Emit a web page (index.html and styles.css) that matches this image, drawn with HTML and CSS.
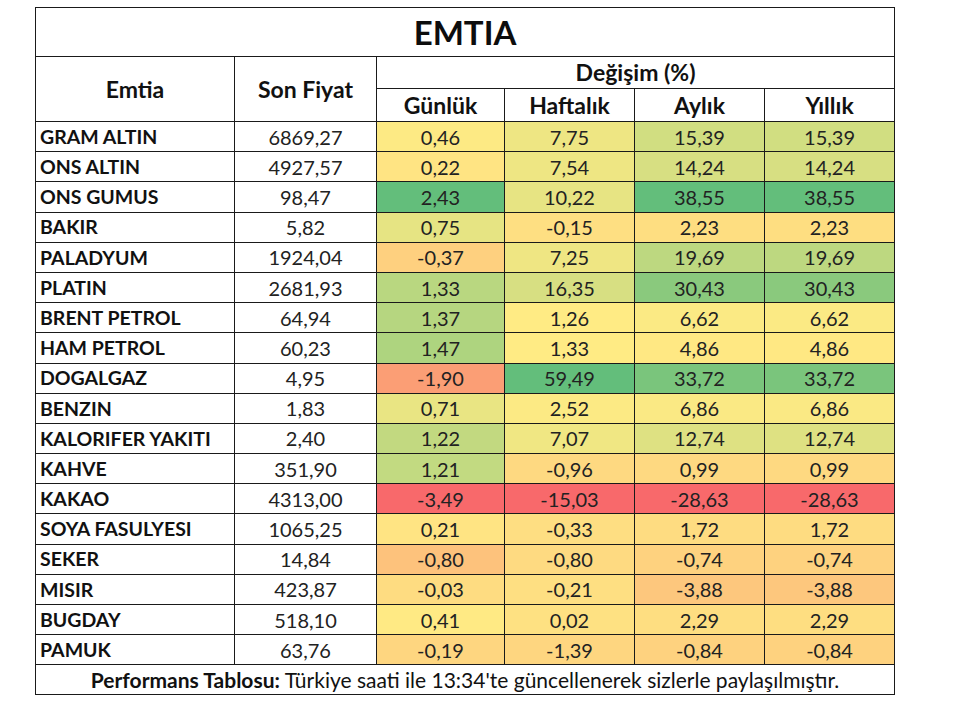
FILE: index.html
```html
<!DOCTYPE html>
<html lang="tr">
<head>
<meta charset="utf-8">
<title>EMTIA</title>
<link rel="stylesheet" href="styles.css">
</head>
<body>
<main class="page">
<table class="emtia">
<colgroup>
<col class="c-name"><col class="c-price"><col class="c-chg1"><col class="c-chg"><col class="c-chg"><col class="c-chg">
</colgroup>
<thead>
<tr class="title-row"><th colspan="6" class="title">EMTIA</th></tr>
<tr class="head1"><th rowspan="2">Emtia</th><th rowspan="2">Son Fiyat</th><th colspan="4">Değişim (%)</th></tr>
<tr class="head2"><th>Günlük</th><th>Haftalık</th><th>Aylık</th><th>Yıllık</th></tr>
</thead>
<tbody>
<tr><td class="name">GRAM ALTIN</td><td class="price">6869,27</td><td class="chg">0,46</td><td class="chg">7,75</td><td class="chg">15,39</td><td class="chg">15,39</td></tr>
<tr><td class="name">ONS ALTIN</td><td class="price">4927,57</td><td class="chg">0,22</td><td class="chg">7,54</td><td class="chg">14,24</td><td class="chg">14,24</td></tr>
<tr><td class="name">ONS GUMUS</td><td class="price">98,47</td><td class="chg">2,43</td><td class="chg">10,22</td><td class="chg">38,55</td><td class="chg">38,55</td></tr>
<tr><td class="name">BAKIR</td><td class="price">5,82</td><td class="chg">0,75</td><td class="chg">-0,15</td><td class="chg">2,23</td><td class="chg">2,23</td></tr>
<tr><td class="name">PALADYUM</td><td class="price">1924,04</td><td class="chg">-0,37</td><td class="chg">7,25</td><td class="chg">19,69</td><td class="chg">19,69</td></tr>
<tr><td class="name">PLATIN</td><td class="price">2681,93</td><td class="chg">1,33</td><td class="chg">16,35</td><td class="chg">30,43</td><td class="chg">30,43</td></tr>
<tr><td class="name">BRENT PETROL</td><td class="price">64,94</td><td class="chg">1,37</td><td class="chg">1,26</td><td class="chg">6,62</td><td class="chg">6,62</td></tr>
<tr><td class="name">HAM PETROL</td><td class="price">60,23</td><td class="chg">1,47</td><td class="chg">1,33</td><td class="chg">4,86</td><td class="chg">4,86</td></tr>
<tr><td class="name">DOGALGAZ</td><td class="price">4,95</td><td class="chg">-1,90</td><td class="chg">59,49</td><td class="chg">33,72</td><td class="chg">33,72</td></tr>
<tr><td class="name">BENZIN</td><td class="price">1,83</td><td class="chg">0,71</td><td class="chg">2,52</td><td class="chg">6,86</td><td class="chg">6,86</td></tr>
<tr><td class="name">KALORIFER YAKITI</td><td class="price">2,40</td><td class="chg">1,22</td><td class="chg">7,07</td><td class="chg">12,74</td><td class="chg">12,74</td></tr>
<tr><td class="name">KAHVE</td><td class="price">351,90</td><td class="chg">1,21</td><td class="chg">-0,96</td><td class="chg">0,99</td><td class="chg">0,99</td></tr>
<tr><td class="name">KAKAO</td><td class="price">4313,00</td><td class="chg">-3,49</td><td class="chg">-15,03</td><td class="chg">-28,63</td><td class="chg">-28,63</td></tr>
<tr><td class="name">SOYA FASULYESI</td><td class="price">1065,25</td><td class="chg">0,21</td><td class="chg">-0,33</td><td class="chg">1,72</td><td class="chg">1,72</td></tr>
<tr><td class="name">SEKER</td><td class="price">14,84</td><td class="chg">-0,80</td><td class="chg">-0,80</td><td class="chg">-0,74</td><td class="chg">-0,74</td></tr>
<tr><td class="name">MISIR</td><td class="price">423,87</td><td class="chg">-0,03</td><td class="chg">-0,21</td><td class="chg">-3,88</td><td class="chg">-3,88</td></tr>
<tr><td class="name">BUGDAY</td><td class="price">518,10</td><td class="chg">0,41</td><td class="chg">0,02</td><td class="chg">2,29</td><td class="chg">2,29</td></tr>
<tr><td class="name">PAMUK</td><td class="price">63,76</td><td class="chg">-0,19</td><td class="chg">-1,39</td><td class="chg">-0,84</td><td class="chg">-0,84</td></tr>
</tbody>
<tfoot>
<tr><td colspan="6" class="foot"><strong>Performans Tablosu:</strong> Türkiye saati ile 13:34'te güncellenerek sizlerle paylaşılmıştır.</td></tr>
</tfoot>
</table>
</main>
<script src="scale.js"></script>
</body>
</html>
```

FILE: styles.css
```css
html, body {
  margin: 0;
  padding: 0;
  background: #ffffff;
}

.page {
  padding: 7px 0 0 35px;
}

.emtia {
  border-collapse: collapse;
  table-layout: fixed;
  width: 859px;
  font-family: "Lato", "Open Sans", sans-serif;
  color: #111;
  border: 1px solid #333;
}

.c-name { width: 199px; }
.c-price { width: 142px; }
.c-chg1 { width: 128px; }
.c-chg { width: 130px; }

.emtia th,
.emtia td {
  border: 1px solid #1a1a1a;
  padding: 0;
  line-height: 1;
}

.title-row th {
  height: 48px;
  font-size: 33px;
  font-weight: 700;
  color: #0d0d0d;
}

.head1 th {
  height: 31px;
  font-size: 23px;
  font-weight: 700;
}

.head2 th {
  height: 32px;
  font-size: 23px;
  font-weight: 700;
}

.emtia tbody td {
  height: 29.2px;
  font-size: 20px;
  text-align: center;
  color: #222;
}

.emtia tbody td.name {
  text-align: left;
  padding-left: 4px;
  font-weight: 700;
  font-size: 19.5px;
  color: #111;
}

.foot {
  height: 29px;
  text-align: center;
  font-size: 21px;
  color: #111;
}

.foot strong {
  font-weight: 700;
}
```

FILE: scale.js
```js
(function () {
  var rows = document.querySelectorAll('.emtia tbody tr');
  var red = [248, 105, 107], yel = [255, 235, 132], grn = [99, 190, 123];
  for (var c = 0; c < 4; c++) {
    var cells = [], vals = [];
    rows.forEach(function (r) {
      var td = r.querySelectorAll('.chg')[c];
      cells.push(td);
      vals.push(parseFloat(td.textContent.replace(',', '.')));
    });
    var s = vals.slice().sort(function (a, b) { return a - b; });
    var n = s.length, min = s[0], max = s[n - 1];
    var k = 0.5 * (n - 1), lo = Math.floor(k), f = k - lo;
    var mid = s[lo] + (s[Math.min(lo + 1, n - 1)] - s[lo]) * f;
    cells.forEach(function (td, i) {
      var v = vals[i], a, b, t;
      if (v <= mid) { a = red; b = yel; t = (v - min) / (mid - min); }
      else { a = yel; b = grn; t = (v - mid) / (max - mid); }
      var col = a.map(function (x, j) { return Math.round(x + (b[j] - x) * t); });
      td.style.backgroundColor = 'rgb(' + col.join(',') + ')';
    });
  }
})();
```
